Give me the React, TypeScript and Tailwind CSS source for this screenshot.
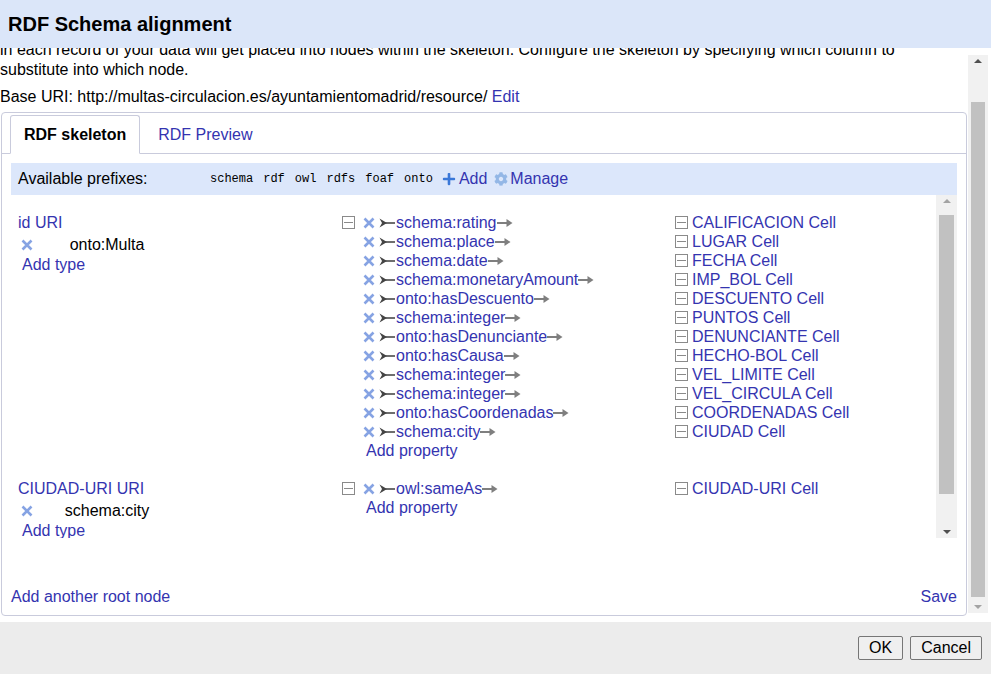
import { FaPlus, FaCog } from "react-icons/fa";

const link = "text-[#3434b0]";

function XIcon() {
  return (
    <svg width="12" height="12" viewBox="0 0 12 12" className="shrink-0">
      <path d="M1.5 1.5 L10.5 10.5 M10.5 1.5 L1.5 10.5" stroke="#86a3e3" strokeWidth="2.6" strokeLinecap="butt" />
    </svg>
  );
}

function PropArrow() {
  return (
    <svg width="16" height="10" viewBox="0 0 16 10" className="shrink-0">
      <path d="M0.5 0.5 L8 5 L0.5 9.5 L3 5 Z" fill="#444" />
      <path d="M6 5 L16 5" stroke="#4a4a4a" strokeWidth="1.6" />
    </svg>
  );
}

function TailArrow() {
  return (
    <svg width="16" height="10" viewBox="0 0 16 10" className="shrink-0">
      <path d="M0 5 L11 5" stroke="#7f7f7f" strokeWidth="2" />
      <path d="M9.5 1 L15.5 5 L9.5 9 Z" fill="#7f7f7f" />
    </svg>
  );
}

function Box() {
  return (
    <span className="w-[13px] h-[13px] border border-[#8a8a8a] flex items-center justify-center shrink-0">
      <span className="w-[9px] h-px bg-[#8a8a8a]" />
    </span>
  );
}

type Prop = { name: string; cell: string };

const root1: Prop[] = [
  { name: "schema:rating", cell: "CALIFICACION Cell" },
  { name: "schema:place", cell: "LUGAR Cell" },
  { name: "schema:date", cell: "FECHA Cell" },
  { name: "schema:monetaryAmount", cell: "IMP_BOL Cell" },
  { name: "onto:hasDescuento", cell: "DESCUENTO Cell" },
  { name: "schema:integer", cell: "PUNTOS Cell" },
  { name: "onto:hasDenunciante", cell: "DENUNCIANTE Cell" },
  { name: "onto:hasCausa", cell: "HECHO-BOL Cell" },
  { name: "schema:integer", cell: "VEL_LIMITE Cell" },
  { name: "schema:integer", cell: "VEL_CIRCULA Cell" },
  { name: "onto:hasCoordenadas", cell: "COORDENADAS Cell" },
  { name: "schema:city", cell: "CIUDAD Cell" },
];

const root2: Prop[] = [{ name: "owl:sameAs", cell: "CIUDAD-URI Cell" }];

function RootNode({ title, type, props }: { title: string; type: string; props: Prop[] }) {
  return (
    <div className="grid grid-cols-[323px_334px_1fr]">
      <div>
        <div className={`h-[19px] flex items-center ${link}`}>{title}</div>
        <div className="mt-[3px] h-[20px] flex items-center">
          <span className="ml-[3px]"><XIcon /></span>
          <span className="w-[148px] text-center text-black">{type}</span>
        </div>
        <div className={`h-[19px] flex items-center ml-[4px] ${link}`}>Add type</div>
      </div>
      <div>
        {props.map((p, i) => (
          <div key={i} className="h-[19px] flex items-center">
            <span className="ml-[1px] mr-[8px] w-[13px]">{i === 0 && <Box />}</span>
            <XIcon />
            <span className="ml-[4px]"><PropArrow /></span>
            <span className={`ml-[1px] ${link}`}>{p.name}</span>
            <TailArrow />
          </div>
        ))}
        <div className={`h-[19px] flex items-center ml-[25px] ${link}`}>Add property</div>
      </div>
      <div>
        {props.map((p, i) => (
          <div key={i} className="h-[19px] flex items-center">
            <Box />
            <span className={`ml-[4px] ${link}`}>{p.cell}</span>
          </div>
        ))}
      </div>
    </div>
  );
}

function Scrollbar({ thumbTop, thumbBottom, upDim }: { thumbTop: number; thumbBottom: number; upDim?: boolean }) {
  return (
    <div className="relative h-full w-full bg-[#f1f1f1]">
      <div className="absolute left-0 right-0 top-[4px] flex justify-center">
        <span className={`w-0 h-0 border-l-[4px] border-r-[4px] border-b-[4px] border-l-transparent border-r-transparent ${upDim ? "border-b-[#a3a3a3]" : "border-b-[#505050]"}`} />
      </div>
      <div className="absolute left-[3px] right-[3px] bg-[#c1c1c1]" style={{ top: thumbTop, bottom: thumbBottom }} />
      <div className="absolute left-0 right-0 bottom-[4px] flex justify-center">
        <span className={`w-0 h-0 border-l-[4px] border-r-[4px] border-t-[4px] border-l-transparent border-r-transparent ${upDim ? "border-t-[#505050]" : "border-t-[#a3a3a3]"}`} />
      </div>
    </div>
  );
}

export default function App() {
  return (
    <div className="w-[991px] h-[674px] flex flex-col bg-white text-[16px] text-black font-['Liberation_Sans',Arial,sans-serif] overflow-hidden">
      <div className="h-[48px] shrink-0 bg-[#dbe6f9] flex items-center px-[8px] text-[20px] font-bold">
        RDF Schema alignment
      </div>

      <div className="h-[574px] shrink-0 flex">
        <div className="w-[967px] overflow-hidden pl-[1px]">
          <p className="-mt-[8px] w-[950px] leading-[20px] -ml-px">
            in each record of your data will get placed into nodes within the skeleton. Configure the skeleton by specifying which column to substitute into which node.
          </p>
          <div className="mt-[7px] h-[19px] leading-[19px] -ml-px">
            Base URI: http://multas-circulacion.es/ayuntamientomadrid/resource/ <span className={link}>Edit</span>
          </div>

          <div className="mt-[6px] w-[966px] border border-[#c9cbdc] rounded-[4px]">
            <div className="pt-[2px] px-[8px] border-b border-[#c9cbdc] flex h-[41px]">
              <div className="h-[39px] -mb-px border border-[#c9cbdc] border-b-white bg-white rounded-t-[3px] px-[13px] flex items-center font-bold">
                RDF skeleton
              </div>
              <div className={`ml-[4px] h-[39px] px-[14px] flex items-center ${link}`}>RDF Preview</div>
            </div>

            <div className="pt-[9px] px-[9px] pb-[9px]">
              <div className="h-[32px] bg-[#dce7fb] flex items-center pl-[7px]">
                <span className="w-[192px]">Available prefixes:</span>
                <span className="flex gap-[10px] text-[12px] font-['Liberation_Mono',monospace]">
                  <span>schema</span>
                  <span>rdf</span>
                  <span>owl</span>
                  <span>rdfs</span>
                  <span>foaf</span>
                  <span>onto</span>
                </span>
                <span className={`ml-[9px] flex items-center ${link}`}>
                  <FaPlus className="text-[#3a78d8] w-[14px] h-[14px] mr-[3px]" />
                  Add
                </span>
                <span className={`ml-[7px] flex items-center ${link}`}>
                  <FaCog className="text-[#93b7e6] w-[14px] h-[14px] mr-[2px]" />
                  Manage
                </span>
              </div>

              <div className="h-[343px] flex">
                <div className="flex-1 overflow-hidden pt-[18px] pl-[7px] flex flex-col gap-[19px]">
                  <RootNode title="id URI" type="onto:Multa" props={root1} />
                  <RootNode title="CIUDAD-URI URI" type="schema:city" props={root2} />
                </div>
                <div className="w-[21px] h-full">
                  <Scrollbar thumbTop={20} thumbBottom={44} upDim />
                </div>
              </div>

              <div className="mt-[49px] h-[19px] flex items-center justify-between">
                <span className={link}>Add another root node</span>
                <span className={link}>Save</span>
              </div>
            </div>
          </div>
        </div>

        <div className="ml-[1px] w-[20px] mt-[7px] mb-[9px]">
          <Scrollbar thumbTop={47} thumbBottom={16} />
        </div>
      </div>

      <div className="flex-1 bg-[#ececec] flex items-start justify-end pt-[14px] pr-[9px] gap-[7px]">
        <button className="h-[24px] px-[10px] border border-[#767676] rounded-[2px] bg-[#efefef] leading-none">OK</button>
        <button className="h-[24px] px-[10px] border border-[#767676] rounded-[2px] bg-[#efefef] leading-none">Cancel</button>
      </div>
    </div>
  );
}
